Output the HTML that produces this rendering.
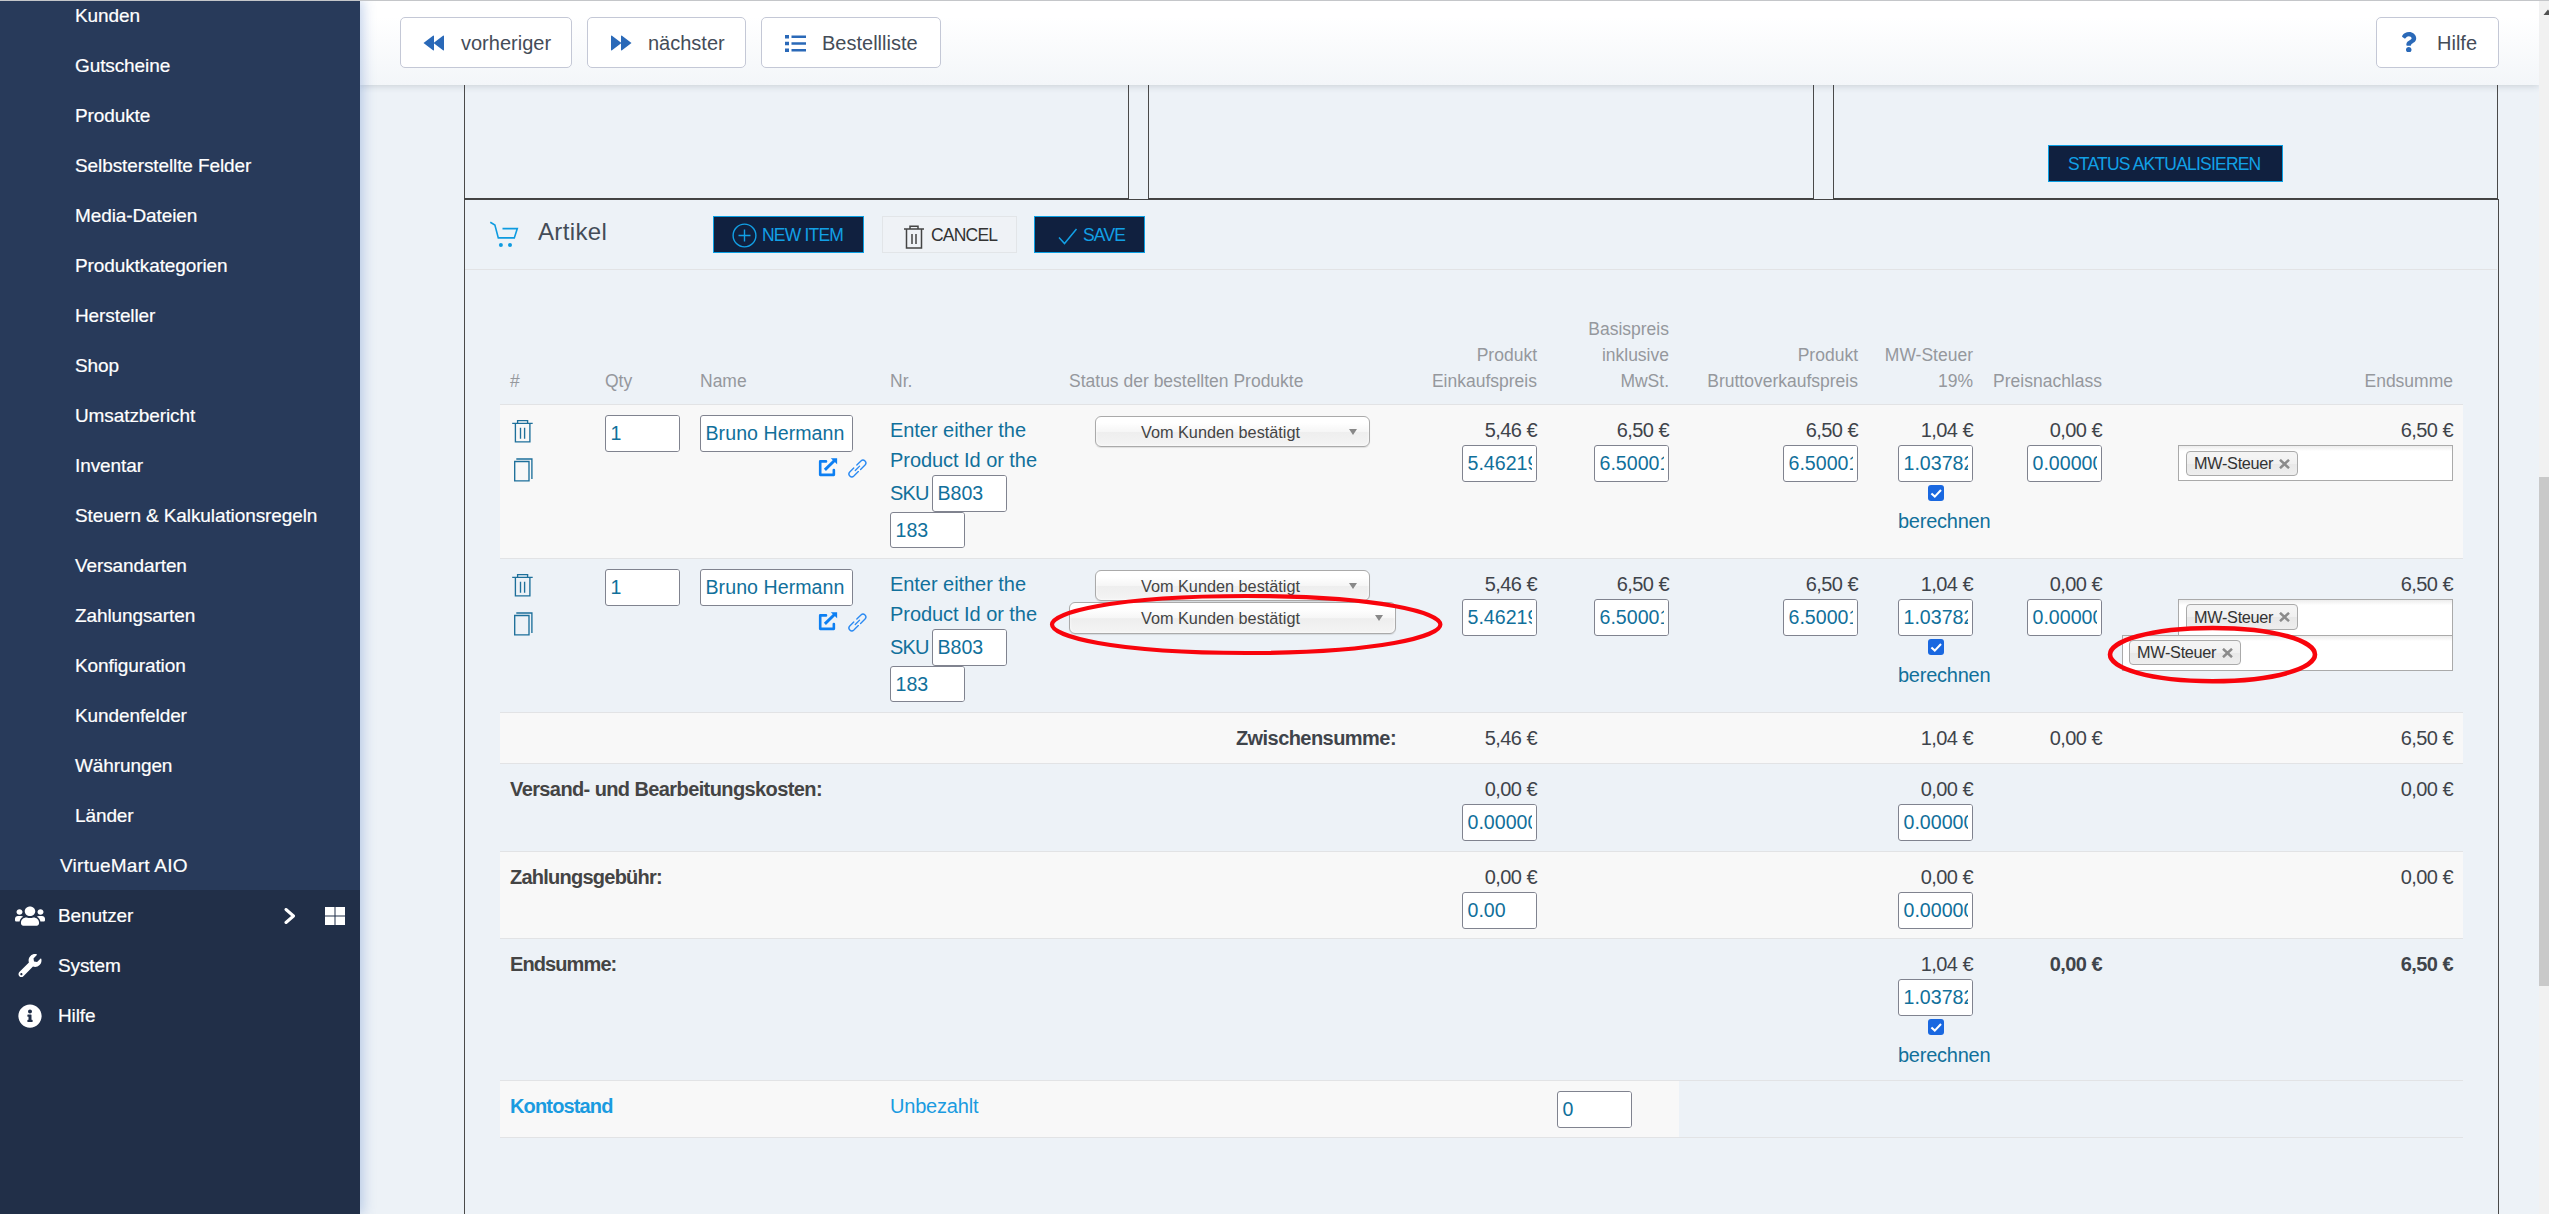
<!DOCTYPE html>
<html lang="de">
<head>
<meta charset="utf-8">
<title>VirtueMart Bestellung</title>
<style>
*{box-sizing:border-box;margin:0;padding:0}
html,body{width:2549px;height:1214px;overflow:hidden}
body{position:relative;background:#edf2f7;font-family:"Liberation Sans",sans-serif;font-size:20px;color:#444;}
.abs{position:absolute}
.t{position:absolute;white-space:nowrap;line-height:30px}
/* sidebar */
#side{position:absolute;left:0;top:0;width:360px;height:1214px;background:#212f48;z-index:30;box-shadow:3px 0 12px rgba(60,110,190,.3)}
#side .sub{position:absolute;left:0;top:0;width:360px;height:890px;background:#283a5a}
#side .it{position:absolute;left:75px;height:50px;line-height:52px;color:#fff;font-size:19px;white-space:nowrap;letter-spacing:-.1px;-webkit-text-stroke:.2px #fff}
#side .mi{left:58px}
/* toolbar */
#bar{position:absolute;left:360px;top:0;width:2179px;height:85px;background:linear-gradient(#fff 20%,#f3f6f9);z-index:20;box-shadow:0 1px 7px rgba(50,65,80,.2)}
.tb{position:absolute;top:17px;height:51px;background:#fff;border:1px solid #c4c8d6;border-radius:5px}
.tb span{position:absolute;top:10px;line-height:30px;font-size:20px;color:#444c58;white-space:nowrap}
/* boxes */
.vline{position:absolute;width:1px;background:#4a4a4a}
.hline{position:absolute;height:1px;background:#424242}
/* buttons */
.dk{position:absolute;top:216px;height:37px;background:#10203f;border:1.5px solid #0a9fe3;color:#12a0e6;font-size:17.5px;letter-spacing:-.8px}
.dk span{position:absolute;top:5px;line-height:26px;white-space:nowrap}
/* table */
.row{position:absolute;left:500px;width:1963px;border-top:1px solid #e2e3e5}
.st{background:#f8f8f8}
.th{position:absolute;white-space:nowrap;font-size:17.5px;line-height:26px;color:#95989d;letter-spacing:0}
.r{text-align:right}
.in{position:absolute;width:75px;height:37px;background:#fff;border:1px solid #80838f;border-radius:3px;color:#11709b;font-size:19.6px;line-height:35px;padding-left:4.5px;overflow:hidden;white-space:nowrap}
.in::after{content:'';position:absolute;right:0;top:0;width:4.5px;height:100%;background:#fff}
.v{position:absolute;white-space:nowrap;line-height:30px;font-size:20px;color:#3f444b;text-align:right;letter-spacing:-.55px}
.b{font-weight:bold}
.tl{color:#11709b;letter-spacing:-.05px}
.ch{position:absolute;height:31px;border:1px solid #aaa;border-radius:6px;background:linear-gradient(#fff 20%,#f6f6f6 50%,#eee 52%,#f4f4f4);box-shadow:0 0 3px #fff inset,0 1px 1px rgba(0,0,0,.1);font-size:16.25px;color:#444;line-height:29px}
.ch span{position:absolute;top:1px;white-space:nowrap}
.ch i{position:absolute;top:12px;width:0;height:0;border-left:4.5px solid transparent;border-right:4.5px solid transparent;border-top:6.5px solid #888}
.cm{position:absolute;border:1px solid #aaa;background:linear-gradient(#eee 1%,#fff 15%)}
.tag{position:absolute;height:25px;border:1px solid #aaa;border-radius:4px;background:linear-gradient(#f4f4f4 20%,#f0f0f0 50%,#e8e8e8 52%,#eee);font-size:16.25px;line-height:23px;color:#333;padding-left:7px;white-space:nowrap;width:112px;letter-spacing:-.3px}
.tag b{position:absolute;right:6px;top:0;font-size:14px;color:#8a8a8a;font-weight:bold}
.cb{position:absolute;width:16px;height:16px;background:#1a68e0;border-radius:3px}
</style>
</head>
<body>
<!-- MAIN -->
<div id="main">
<div class="vline" style="left:464px;top:80px;height:1134px"></div>
<div class="vline" style="left:1128px;top:80px;height:119px"></div>
<div class="vline" style="left:1148px;top:80px;height:119px"></div>
<div class="vline" style="left:1813px;top:80px;height:119px"></div>
<div class="vline" style="left:1833px;top:80px;height:119px"></div>
<div class="vline" style="left:2497px;top:80px;height:119px"></div>
<div class="vline" style="left:2498px;top:199px;height:1015px"></div>
<div class="hline" style="left:464px;top:198px;width:665px"></div>
<div class="hline" style="left:1148px;top:198px;width:666px"></div>
<div class="hline" style="left:1833px;top:198px;width:665px"></div>
<div class="hline" style="left:464px;top:199px;width:2035px;background:#454545"></div>
<div class="dk" style="left:2048px;top:145px;width:235px"><span style="left:19px">STATUS AKTUALISIEREN</span></div>
<div class="abs" style="left:465px;top:269px;width:2032px;height:1px;background:#e2e3e5"></div>
<svg class="abs" style="left:488px;top:220px" width="32" height="28" viewBox="0 0 32 28"><path fill="none" stroke="#0e9be0" stroke-width="1.600" d="M2.300 2.200L6.900 5L10.300 17.900H26.300L29.300 8.600H14.500"/><circle cx="12.900" cy="25" r="2" fill="#0e9be0"/><circle cx="22" cy="25" r="2" fill="#0e9be0"/></svg>
<div class="t" style="left:538px;top:214px;font-size:24px;line-height:36px;color:#444c58;letter-spacing:.35px">Artikel</div>
<div class="dk" style="left:713px;width:151px"><svg class="abs" style="left:18px;top:6px" width="25" height="25" viewBox="0 0 25 25"><circle cx="12.500" cy="12.500" r="11.400" fill="none" stroke="#12a0e6" stroke-width="1.400"/><path d="M12.500 6.500v12M6.500 12.500h12" stroke="#12a0e6" stroke-width="1.400"/></svg><span style="left:48px">NEW ITEM</span></div>
<div class="abs" style="left:882px;top:216px;width:135px;height:37px;border:1px solid #e2e5e8;background:#eff2f6;font-size:17.500px;letter-spacing:-.8px;color:#333"><svg class="abs" style="left:20px;top:8px" width="22" height="24" viewBox="0 0 22 24"><g fill="none" stroke="#444" stroke-width="1.500"><path d="M1 4h20M7 4V1.200h8V4M3.500 4.500V23h15V4.500M9 9v10M13 9v10"/></g></svg><span class="t" style="left:48px;top:5px;line-height:26px">CANCEL</span></div>
<div class="dk" style="left:1034px;width:111px"><svg class="abs" style="left:23px;top:11px" width="20" height="17" viewBox="0 0 20 17"><path d="M1 9.500 L6.500 15.500 L18.500 1" fill="none" stroke="#12a0e6" stroke-width="1.500"/></svg><span style="left:48px">SAVE</span></div>
<div class="row st" style="top:404px;height:154px"></div>
<div class="row" style="top:558px;height:154px"></div>
<div class="row st" style="top:712px;height:51px"></div>
<div class="row" style="top:763px;height:88px"></div>
<div class="row st" style="top:851px;height:87px"></div>
<div class="row" style="top:938px;height:142px"></div>
<div class="row" style="top:1080px;height:57px"></div><div class="abs st" style="left:500px;top:1081px;width:1179px;height:56px"></div>
<div class="abs" style="left:500px;top:1137px;width:1963px;height:1px;background:#e2e3e5"></div>
<div class="th" style="left:510px;top:368px">#</div>
<div class="th" style="left:605px;top:368px">Qty</div>
<div class="th" style="left:700px;top:368px">Name</div>
<div class="th" style="left:890px;top:368px">Nr.</div>
<div class="th" style="left:1069px;top:368px">Status der bestellten Produkte</div>
<div class="th r" style="right:1012px;top:342px">Produkt</div>
<div class="th r" style="right:1012px;top:368px">Einkaufspreis</div>
<div class="th r" style="right:880px;top:316px">Basispreis</div>
<div class="th r" style="right:880px;top:342px">inklusive</div>
<div class="th r" style="right:880px;top:368px">MwSt.</div>
<div class="th r" style="right:691px;top:342px">Produkt</div>
<div class="th r" style="right:691px;top:368px">Bruttoverkaufspreis</div>
<div class="th r" style="right:576px;top:342px">MW-Steuer</div>
<div class="th r" style="right:576px;top:368px">19%</div>
<div class="th r" style="right:447px;top:368px">Preisnachlass</div>
<div class="th r" style="right:96px;top:368px">Endsumme</div>
<svg class="abs" style="left:512px;top:419px" width="22" height="25" viewBox="0 0 22 25"><path fill="none" stroke="#1d6f9a" stroke-width="1.350" d="M0.200 4.300H20.700M5.600 4.300V1.600H15.600V4.300M3.400 4.300V22.900H17.900V4.300M8.500 8.800V19.700M12.600 8.800V19.700"/></svg>
<svg class="abs" style="left:512px;top:457px" width="22" height="26" viewBox="0 0 22 26"><path fill="none" stroke="#1d6f9a" stroke-width="1.350" d="M2.700 4.500H17V23.900H2.700zM4.300 2H19.900V22"/></svg>
<div class="in" style="left:605px;top:415px">1</div>
<div class="in" style="width:153px;letter-spacing:.05px;left:700px;top:415px">Bruno Hermann</div>
<svg class="abs" style="left:818px;top:457px" width="20" height="20" viewBox="0 0 20 20"><g fill="none" stroke="#0d7ff2" stroke-linejoin="round"><path stroke-width="2.600" stroke-linecap="round" d="M8 4.400H2.200V17.850H15.850V13"/><path stroke-width="2.900" d="M6.900 12.900L16.500 3.500"/></g><path d="M12.800 1.200H19.100V7.300z" fill="#0d7ff2"/></svg>
<svg class="abs" style="left:846px;top:457px" width="22" height="22" viewBox="0 0 22 22"><path fill="none" stroke="#2b8af2" stroke-width="1.350" stroke-linecap="round" d="M10.800 8.100L14.950 3.950A2.900 2.900 0 0 1 19.050 8.050L14.600 12.500M7.750 11L3.750 15A2.900 2.900 0 0 0 7.850 19.100L12.350 14.600M9.260 13.470L13.580 9.140"/></svg>
<div class="t tl" style="left:890px;top:415px">Enter either the</div>
<div class="t tl" style="left:890px;top:445px">Product Id or the</div>
<div class="t tl" style="left:890px;top:478px;letter-spacing:-.8px">SKU</div>
<div class="in" style="left:932px;top:475px">B803</div>
<div class="in" style="left:890px;top:512px;height:36px">183</div>
<div class="ch" style="left:1095px;top:416px;width:275px"><span style="left:45px">Vom Kunden bestätigt</span><i style="right:12px"></i></div>
<div class="v" style="right:1012px;top:415px">5,46 €</div>
<div class="v" style="right:880px;top:415px">6,50 €</div>
<div class="v" style="right:691px;top:415px">6,50 €</div>
<div class="v" style="right:576px;top:415px">1,04 €</div>
<div class="v" style="right:447px;top:415px">0,00 €</div>
<div class="v" style="right:96px;top:415px">6,50 €</div>
<div class="in" style="left:1462px;top:445px">5.46219</div>
<div class="in" style="left:1594px;top:445px">6.50001</div>
<div class="in" style="left:1783px;top:445px">6.50001</div>
<div class="in" style="left:1898px;top:445px">1.03782</div>
<div class="in" style="left:2027px;top:445px">0.00000</div>
<div class="cm" style="left:2178px;top:445px;width:275px;height:36px"><div class="tag" style="left:7px;top:5px">MW-Steuer<svg class="abs" style="right:7px;top:7px" width="11" height="10" viewBox="0 0 11 10"><path d="M1 .8L10 9.200M10 .8L1 9.200" stroke="#8b8b8b" stroke-width="2.500"/></svg></div></div>
<div class="cb" style="left:1927.5px;top:485px"><svg style="display:block" width="16" height="16" viewBox="0 0 16 16"><path d="M3.400 8.400L6.800 11.600L13 5" fill="none" stroke="#fff" stroke-width="2.100"/></svg></div>
<div class="t tl" style="left:1898px;top:506px;letter-spacing:-.25px">berechnen</div>
<svg class="abs" style="left:512px;top:573px" width="22" height="25" viewBox="0 0 22 25"><path fill="none" stroke="#1d6f9a" stroke-width="1.350" d="M0.200 4.300H20.700M5.600 4.300V1.600H15.600V4.300M3.400 4.300V22.900H17.900V4.300M8.500 8.800V19.700M12.600 8.800V19.700"/></svg>
<svg class="abs" style="left:512px;top:611px" width="22" height="26" viewBox="0 0 22 26"><path fill="none" stroke="#1d6f9a" stroke-width="1.350" d="M2.700 4.500H17V23.900H2.700zM4.300 2H19.900V22"/></svg>
<div class="in" style="left:605px;top:569px">1</div>
<div class="in" style="width:153px;letter-spacing:.05px;left:700px;top:569px">Bruno Hermann</div>
<svg class="abs" style="left:818px;top:611px" width="20" height="20" viewBox="0 0 20 20"><g fill="none" stroke="#0d7ff2" stroke-linejoin="round"><path stroke-width="2.600" stroke-linecap="round" d="M8 4.400H2.200V17.850H15.850V13"/><path stroke-width="2.900" d="M6.900 12.900L16.500 3.500"/></g><path d="M12.800 1.200H19.100V7.300z" fill="#0d7ff2"/></svg>
<svg class="abs" style="left:846px;top:611px" width="22" height="22" viewBox="0 0 22 22"><path fill="none" stroke="#2b8af2" stroke-width="1.350" stroke-linecap="round" d="M10.800 8.100L14.950 3.950A2.900 2.900 0 0 1 19.050 8.050L14.600 12.500M7.750 11L3.750 15A2.900 2.900 0 0 0 7.850 19.100L12.350 14.600M9.260 13.470L13.580 9.140"/></svg>
<div class="t tl" style="left:890px;top:569px">Enter either the</div>
<div class="t tl" style="left:890px;top:599px">Product Id or the</div>
<div class="t tl" style="left:890px;top:632px;letter-spacing:-.8px">SKU</div>
<div class="in" style="left:932px;top:629px">B803</div>
<div class="in" style="left:890px;top:666px;height:36px">183</div>
<div class="ch" style="left:1095px;top:570px;width:275px"><span style="left:45px">Vom Kunden bestätigt</span><i style="right:12px"></i></div>
<div class="ch" style="left:1069px;top:602px;width:327px;height:32px;line-height:28px"><span style="left:71px">Vom Kunden bestätigt</span><i style="right:12px"></i></div>
<div class="v" style="right:1012px;top:569px">5,46 €</div>
<div class="v" style="right:880px;top:569px">6,50 €</div>
<div class="v" style="right:691px;top:569px">6,50 €</div>
<div class="v" style="right:576px;top:569px">1,04 €</div>
<div class="v" style="right:447px;top:569px">0,00 €</div>
<div class="v" style="right:96px;top:569px">6,50 €</div>
<div class="in" style="left:1462px;top:599px">5.46219</div>
<div class="in" style="left:1594px;top:599px">6.50001</div>
<div class="in" style="left:1783px;top:599px">6.50001</div>
<div class="in" style="left:1898px;top:599px">1.03782</div>
<div class="in" style="left:2027px;top:599px">0.00000</div>
<div class="cm" style="left:2178px;top:599px;width:275px;height:37px"><div class="tag" style="left:7px;top:4px;height:26px;line-height:24px">MW-Steuer<svg class="abs" style="right:7px;top:7px" width="11" height="10" viewBox="0 0 11 10"><path d="M1 .8L10 9.200M10 .8L1 9.200" stroke="#8b8b8b" stroke-width="2.500"/></svg></div></div>
<div class="cm" style="left:2122px;top:635px;width:331px;height:36px"><div class="tag" style="left:6px;top:4px">MW-Steuer<svg class="abs" style="right:7px;top:7px" width="11" height="10" viewBox="0 0 11 10"><path d="M1 .8L10 9.200M10 .8L1 9.200" stroke="#8b8b8b" stroke-width="2.500"/></svg></div></div>
<div class="cb" style="left:1927.5px;top:639px"><svg style="display:block" width="16" height="16" viewBox="0 0 16 16"><path d="M3.400 8.400L6.800 11.600L13 5" fill="none" stroke="#fff" stroke-width="2.100"/></svg></div>
<div class="t tl" style="left:1898px;top:660px;letter-spacing:-.25px">berechnen</div>
<div class="v b" style="right:1153px;top:723px;letter-spacing:-.55px">Zwischensumme:</div>
<div class="v" style="right:1012px;top:723px">5,46 €</div>
<div class="v" style="right:576px;top:723px">1,04 €</div>
<div class="v" style="right:447px;top:723px">0,00 €</div>
<div class="v" style="right:96px;top:723px">6,50 €</div>
<div class="t b" style="left:510px;top:774px;letter-spacing:-.6px">Versand- und Bearbeitungskosten:</div>
<div class="v" style="right:1012px;top:774px">0,00 €</div>
<div class="v" style="right:576px;top:774px">0,00 €</div>
<div class="v" style="right:96px;top:774px">0,00 €</div>
<div class="in" style="left:1462px;top:804px">0.00000</div>
<div class="in" style="left:1898px;top:804px">0.00000</div>
<div class="t b" style="left:510px;top:862px;letter-spacing:-.76px">Zahlungsgebühr:</div>
<div class="v" style="right:1012px;top:862px">0,00 €</div>
<div class="v" style="right:576px;top:862px">0,00 €</div>
<div class="v" style="right:96px;top:862px">0,00 €</div>
<div class="in" style="left:1462px;top:892px">0.00</div>
<div class="in" style="left:1898px;top:892px">0.00000</div>
<div class="t b" style="left:510px;top:949px;letter-spacing:-.9px">Endsumme:</div>
<div class="v" style="right:576px;top:949px">1,04 €</div>
<div class="v b" style="right:447px;top:949px">0,00 €</div>
<div class="v b" style="right:96px;top:949px">6,50 €</div>
<div class="in" style="left:1898px;top:979px">1.03782</div>
<div class="cb" style="left:1927.5px;top:1019px"><svg style="display:block" width="16" height="16" viewBox="0 0 16 16"><path d="M3.400 8.400L6.800 11.600L13 5" fill="none" stroke="#fff" stroke-width="2.100"/></svg></div>
<div class="t tl" style="left:1898px;top:1040px;letter-spacing:-.25px">berechnen</div>
<div class="t b" style="left:510px;top:1091px;color:#1a9be0;letter-spacing:-.85px">Kontostand</div>
<div class="t" style="left:890px;top:1091px;color:#1a9be0;letter-spacing:-.2px">Unbezahlt</div>
<div class="in" style="left:1557px;top:1091px">0</div>
<svg class="abs" style="left:1045.6px;top:590px;z-index:5" width="400.4" height="69" viewBox="0 0 400.4 69"><path d="M6 34.5C6 23.1 64.26 6 200.2 6S394.4 23.1 394.4 34.5S336.14 63 200.2 63S6 45.9 6 34.5z" fill="none" stroke="#f8040c" stroke-width="4.2" stroke-linejoin="round"/></svg>
<svg class="abs" style="left:2103.5px;top:621.5px;z-index:5" width="217" height="65.2" viewBox="0 0 217 65.2"><path d="M6 32.6C6 19.3 44.95 6 108.5 6S211 19.3 211 32.6S172.05 59.2 108.5 59.2S6 45.9 6 32.6z" fill="none" stroke="#f8040c" stroke-width="4.6" stroke-linejoin="round"/></svg>
</div>
<!-- TOOLBAR -->
<div id="bar">
<div class="tb" style="left:40px;width:172px"><svg class="abs" style="left:22px;top:17px" width="22" height="16" viewBox="0 0 22 16"><path fill="#2a69b8" d="M0.500 8 L10 0.800 Q11 0.200 11 1.300 V14.700 Q11 15.800 10 15.200 Z M10.500 8 L20 0.800 Q21 0.200 21 1.300 V14.700 Q21 15.800 20 15.200 Z"/></svg><span style="left:60px">vorheriger</span></div>
<div class="tb" style="left:227px;width:159px"><svg class="abs" style="left:22px;top:17px" width="22" height="16" viewBox="0 0 22 16"><path fill="#2a69b8" d="M21.500 8 L12 0.800 Q11 0.200 11 1.300 V14.700 Q11 15.800 12 15.200 Z M11.500 8 L2 0.800 Q1 0.200 1 1.300 V14.700 Q1 15.800 2 15.200 Z"/></svg><span style="left:60px">nächster</span></div>
<div class="tb" style="left:401px;width:180px"><svg class="abs" style="left:23px;top:17px" width="21" height="17" viewBox="0 0 21 17"><path fill="#2a69b8" d="M0 0h4v3.500H0zM0 6.700h4v3.500H0zM0 13.400h4v3.500H0zM6.500 0.500h14.500v2.600H6.500zM6.500 7.200h14.500v2.600H6.500zM6.500 13.900h14.500v2.600H6.500z"/></svg><span style="left:60px">Bestellliste</span></div>
<div class="tb" style="left:2016px;width:123px"><svg class="abs" style="left:24.300px;top:13.800px" width="15.500" height="20.600" viewBox="0 0 384 512"><path fill="#2a69b8" d="M202.021 0C122.202 0 70.503 32.703 29.914 91.026c-7.363 10.580-5.093 25.086 5.178 32.874l43.138 32.709c10.373 7.865 25.132 6.026 33.253-4.148 25.049-31.381 43.630-49.449 82.757-49.449 30.764 0 68.816 19.799 68.816 49.631 0 22.552-18.617 34.134-48.993 51.164-35.423 19.860-82.299 44.576-82.299 106.405V320c0 13.255 10.745 24 24 24h72.471c13.255 0 24-10.745 24-24v-5.773c0-42.860 125.268-44.645 125.268-160.627C377.504 66.256 286.902 0 202.021 0zM192 373.459c-38.196 0-69.271 31.075-69.271 69.271 0 38.195 31.075 69.270 69.271 69.270s69.271-31.075 69.271-69.271-31.075-69.270-69.271-69.270z"/></svg><span style="left:60px">Hilfe</span></div>
</div>
<!-- SIDEBAR -->
<div id="side"><div class="sub"></div>
<div class="it" style="top:-10px">Kunden</div>
<div class="it" style="top:40px">Gutscheine</div>
<div class="it" style="top:90px">Produkte</div>
<div class="it" style="top:140px">Selbsterstellte Felder</div>
<div class="it" style="top:190px">Media-Dateien</div>
<div class="it" style="top:240px">Produktkategorien</div>
<div class="it" style="top:290px">Hersteller</div>
<div class="it" style="top:340px">Shop</div>
<div class="it" style="top:390px">Umsatzbericht</div>
<div class="it" style="top:440px">Inventar</div>
<div class="it" style="top:490px">Steuern &amp; Kalkulationsregeln</div>
<div class="it" style="top:540px">Versandarten</div>
<div class="it" style="top:590px">Zahlungsarten</div>
<div class="it" style="top:640px">Konfiguration</div>
<div class="it" style="top:690px">Kundenfelder</div>
<div class="it" style="top:740px">Währungen</div>
<div class="it" style="top:790px">Länder</div>
<div class="it" style="left:60px;top:840px;letter-spacing:.25px">VirtueMart AIO</div>
<div class="it mi" style="top:890px">Benutzer</div>
<div class="it mi" style="top:940px">System</div>
<div class="it mi" style="top:990px">Hilfe</div>
<svg class="abs" style="left:14.500px;top:904.500px" width="30" height="22" viewBox="0 0 640 512" preserveAspectRatio="none"><path fill="#fff" d="M96 224c35.300 0 64-28.700 64-64s-28.700-64-64-64-64 28.700-64 64 28.700 64 64 64zm448 0c35.300 0 64-28.700 64-64s-28.700-64-64-64-64 28.700-64 64 28.700 64 64 64zm32 32h-64c-17.600 0-33.500 7.100-45.100 18.600 40.300 22.100 68.900 62 75.100 109.400h66c17.700 0 32-14.300 32-32v-32c0-35.300-28.700-64-64-64zm-256 0c61.900 0 112-50.100 112-112S381.900 32 320 32 208 82.100 208 144s50.100 112 112 112zm76.800 32h-8.300c-20.800 10-43.900 16-68.500 16s-47.600-6-68.500-16h-8.300C179.600 288 128 339.600 128 403.200V432c0 26.500 21.500 48 48 48h288c26.500 0 48-21.500 48-48v-28.800c0-63.600-51.600-115.200-115.200-115.200zm-223.700-13.400C161.500 263.100 145.600 256 128 256H64c-35.300 0-64 28.700-64 64v32c0 17.700 14.300 32 32 32h65.900c6.300-47.400 34.900-87.300 75.200-109.400z"/></svg>
<svg class="abs" style="left:284px;top:908px" width="12" height="16" viewBox="0 0 12 16"><path d="M2 1.5 L9.5 8 L2 14.500" fill="none" stroke="#fff" stroke-width="3" stroke-linecap="round" stroke-linejoin="round"/></svg>
<svg class="abs" style="left:325px;top:907px" width="20" height="18" viewBox="0 0 20 18"><path fill="#fff" d="M0 0h9.500v8.500H0zM10.500 0H20v8.500h-9.500zM0 9.500h9.500V18H0zM10.500 9.500H20V18h-9.500z"/></svg>
<svg class="abs" style="left:17.500px;top:954px" width="24" height="23" viewBox="0 0 512 512"><path fill="#fff" d="M507.730 109.100c-2.240-9.030-13.540-12.090-20.120-5.510l-74.360 74.360-67.880-11.310-11.310-67.880 74.360-74.360c6.620-6.620 3.430-17.900-5.660-20.160-47.380-11.740-99.550.910-136.580 37.930-39.640 39.640-50.550 97.100-34.050 147.200L18.740 402.760c-24.990 24.990-24.990 65.510 0 90.500 24.990 24.990 65.510 24.990 90.500 0l213.210-213.210c50.120 16.710 107.470 5.680 147.370-34.220 37.070-37.070 49.700-89.320 37.910-136.730zM64 472c-13.250 0-24-10.750-24-24 0-13.260 10.750-24 24-24s24 10.740 24 24c0 13.250-10.750 24-24 24z"/></svg>
<svg class="abs" style="left:17.500px;top:1003.500px" width="24" height="24" viewBox="0 0 512 512"><path fill="#fff" d="M256 8C119.043 8 8 119.083 8 256c0 136.997 111.043 248 248 248s248-111.003 248-248C504 119.083 392.957 8 256 8zm0 110c23.196 0 42 18.804 42 42s-18.804 42-42 42-42-18.804-42-42 18.804-42 42-42zm56 254c0 6.627-5.373 12-12 12h-88c-6.627 0-12-5.373-12-12v-24c0-6.627 5.373-12 12-12h12v-64h-12c-6.627 0-12-5.373-12-12v-24c0-6.627 5.373-12 12-12h64c6.627 0 12 5.373 12 12v100h12c6.627 0 12 5.373 12 12v24z"/></svg>
</div>
<!-- SCROLLBAR -->
<div class="abs" style="left:2539px;top:0;width:10px;height:1214px;background:#f1f1f1;z-index:40"></div>
<div class="abs" style="left:2539px;top:477px;width:10px;height:509px;background:#c9c9c9;z-index:41"></div>
<svg class="abs" style="left:2539px;top:0;z-index:42" width="10" height="20" viewBox="0 0 10 20"><path d="M4.500 15L9 9.500L13.500 15z" fill="#505050"/></svg>
<div class="abs" style="left:0;top:0;width:2549px;height:1px;background:#c4c6c9;z-index:50"></div>
</body>
</html>
